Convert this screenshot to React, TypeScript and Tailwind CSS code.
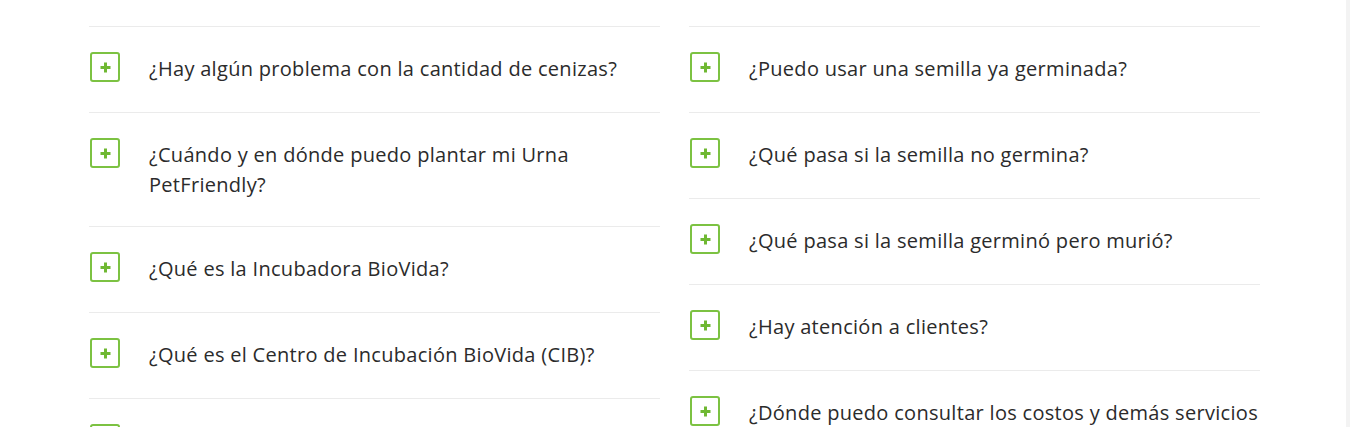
const FAQ_LEFT: string[][] = [
  ['¿Hay algún problema con la cantidad de cenizas?'],
  ['¿Cuándo y en dónde puedo plantar mi Urna', 'PetFriendly?'],
  ['¿Qué es la Incubadora BioVida?'],
  ['¿Qué es el Centro de Incubación BioVida (CIB)?'],
  [''],
];

const FAQ_RIGHT: string[][] = [
  ['¿Puedo usar una semilla ya germinada?'],
  ['¿Qué pasa si la semilla no germina?'],
  ['¿Qué pasa si la semilla germinó pero murió?'],
  ['¿Hay atención a clientes?'],
  ['¿Dónde puedo consultar los costos y demás servicios'],
];

function PlusBox() {
  return (
    <div className="ml-px flex h-[30px] w-[30px] shrink-0 items-center justify-center rounded-[3px] border-2 border-[#7cc242]">
      <svg width="11" height="11" viewBox="0 0 11 11">
        <path d="M5.5 0.5v10M0.5 5.5h10" stroke="#6fb832" strokeWidth="3" />
      </svg>
    </div>
  );
}

function FaqItem({ lines }: { lines: string[] }) {
  return (
    <div className="flex border-t border-[#ebebeb] pt-[25px] pb-[29px]">
      <PlusBox />
      <p className="ml-[29px] mt-[3px] text-[20px] leading-[28px] tracking-[0.3px] text-[#2b2b2b] whitespace-nowrap">
        {lines.map((line, i) => (
          <span key={i} className={i > 0 ? 'mt-[2px] -mb-[2px] block' : 'block min-h-[28px]'}>
            {line}
          </span>
        ))}
      </p>
    </div>
  );
}

export default function App() {
  return (
    <div
      className="flex h-[427px] w-full overflow-hidden bg-white"
      style={{ fontFamily: '"Open Sans", Lato, sans-serif' }}
    >
      <div className="flex-1 pl-[89px] pt-[26px]">
        <div className="grid w-[1171px] grid-cols-2 gap-x-[29px]">
          <div className="flex flex-col">
            {FAQ_LEFT.map((q, i) => (
              <FaqItem key={i} lines={q} />
            ))}
          </div>
          <div className="flex flex-col">
            {FAQ_RIGHT.map((q, i) => (
              <FaqItem key={i} lines={q} />
            ))}
          </div>
        </div>
      </div>
      <div className="w-[4px] shrink-0 bg-[#f3f3f3]" />
    </div>
  );
}
